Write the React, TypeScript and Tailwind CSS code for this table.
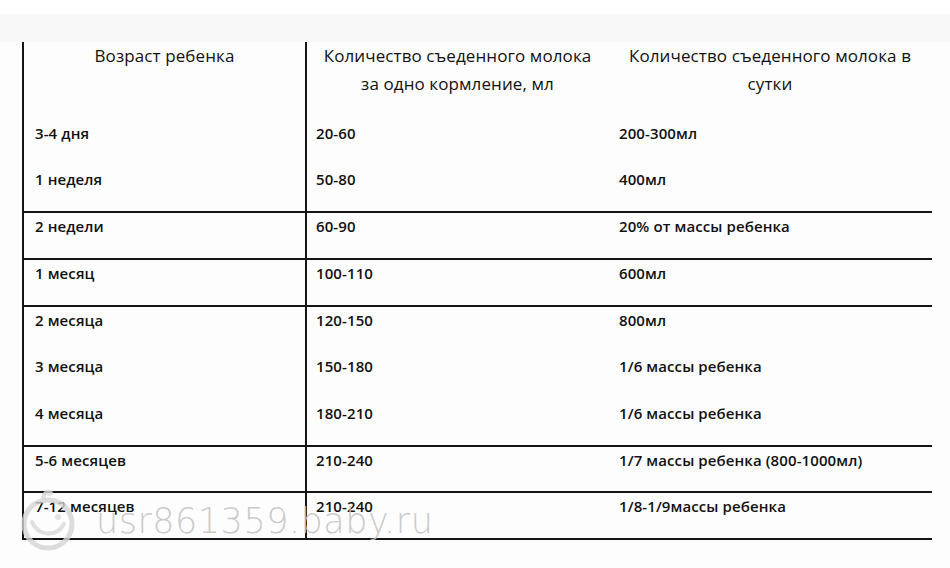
import React from "react";

const rows = [
  { age: "3-4 дня", once: "20-60", day: "200-300мл", line: false, h: "h-[46px]" },
  { age: "1 неделя", once: "50-80", day: "400мл", line: true, h: "h-[47px]" },
  { age: "2 недели", once: "60-90", day: "20% от массы ребенка", line: true, h: "h-[47px]" },
  { age: "1 месяц", once: "100-110", day: "600мл", line: true, h: "h-[47px]" },
  { age: "2 месяца", once: "120-150", day: "800мл", line: false, h: "h-[46px]" },
  { age: "3 месяца", once: "150-180", day: "1/6 массы ребенка", line: false, h: "h-[47px]" },
  { age: "4 месяца", once: "180-210", day: "1/6 массы ребенка", line: true, h: "h-[47px]" },
  { age: "5-6 месяцев", once: "210-240", day: "1/7 массы ребенка (800-1000мл)", line: true, h: "h-[46px]" },
  { age: "7-12 месяцев", once: "210-240", day: "1/8-1/9массы ребенка", line: true, h: "h-[47px]" },
];

const BabyLogo = () => (
  <svg width="64" height="70" viewBox="0 0 64 70" fill="none" className="opacity-80">
    <circle cx="30" cy="40" r="24" stroke="#d4d4d4" strokeWidth="5" />
    <path d="M26 16 C24 9 30 6 33 9" stroke="#d4d4d4" strokeWidth="4" strokeLinecap="round" />
    <circle cx="31" cy="9" r="3" fill="#dcdcdc" />
    <path d="M14 38 C20 52 38 54 46 40" stroke="#d8d8d8" strokeWidth="4" strokeLinecap="round" />
    <circle cx="40" cy="33" r="3" fill="#dcdcdc" />
  </svg>
);

export default function App() {
  return (
    <div className="relative w-[950px] h-[568px] overflow-hidden bg-[#fdfdfd] text-[#111] font-['Open_Sans','Noto_Sans',sans-serif]">
      <div className="h-[14px] bg-white" />
      <div className="h-[28px] bg-[#f8f8f8]" />
      <div className="ml-[22px] w-[910px]">
        <div className="border-l-2 border-[#151515]">
          <div className="grid grid-cols-[283px_301px_324px] h-[78px] text-[17px] leading-[28px] tracking-[0.1px] text-[#111]">
            <div className="border-r-2 border-[#151515] text-center">Возраст ребенка</div>
            <div className="text-center">
              <div>Количество съеденного молока</div>
              <div>за одно кормление, мл</div>
            </div>
            <div className="text-center">
              <div>Количество съеденного молока в</div>
              <div>сутки</div>
            </div>
          </div>
          {rows.map((r, i) => (
            <div
              key={i}
              className={`grid grid-cols-[283px_301px_324px] ${r.h} text-[15px] leading-[20px] font-semibold tracking-[0.1px] ${
                r.line ? "border-b-2 border-[#151515]" : ""
              }`}
            >
              <div className="border-r-2 border-[#151515] pl-[11px] pt-[3px]">{r.age}</div>
              <div className="pl-[9px] pt-[3px]">{r.once}</div>
              <div className="pl-[11px] pt-[3px]">{r.day}</div>
            </div>
          ))}
        </div>
      </div>
      <div className="pointer-events-none absolute left-[18px] top-[484px] flex items-center gap-[14px]">
        <BabyLogo />
        <span className="mt-[4px] text-[35px] leading-none font-extralight text-[#c4c4c4]/90 font-['DejaVu_Sans','Liberation_Sans',sans-serif] tracking-[0.5px]">
          usr861359.baby.ru
        </span>
      </div>
    </div>
  );
}
